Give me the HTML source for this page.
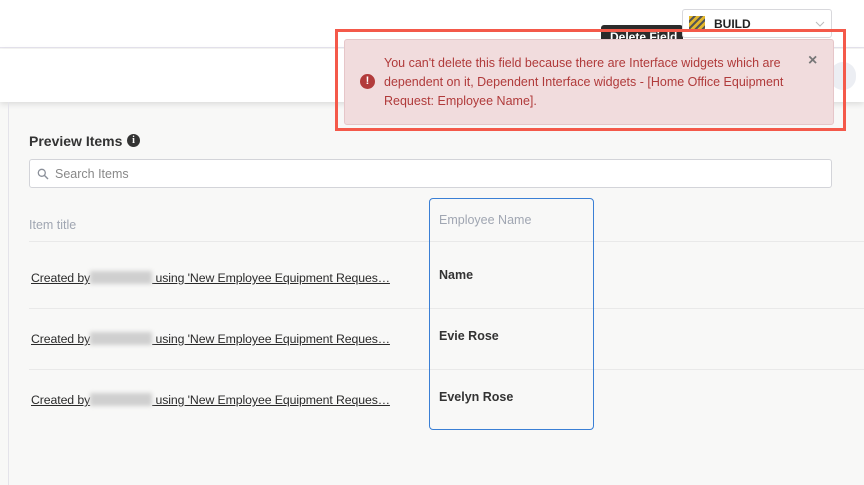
<!DOCTYPE html>
<html><head><style>
*{box-sizing:border-box;margin:0;padding:0}
body{width:864px;height:485px;overflow:hidden;background:#f8f8f7;font-family:"Liberation Sans",Arial,sans-serif;position:relative}
.abs{position:absolute}
.hdr{left:0;top:0;width:864px;height:48px;background:#fff;border-bottom:1px solid #e6e4ee}
.bar{left:0;top:49px;width:864px;height:53px;background:#fff;box-shadow:0 2px 6px rgba(0,0,0,.12)}
.lside{left:8px;top:102px;width:1px;height:383px;background:#e4e3ea}
.line{height:1px;background:#e9e9e9;left:29px;width:835px}
.link{left:31px;font-size:12.3px;letter-spacing:-0.1px;color:#2a2a2a;text-decoration:underline;white-space:nowrap}
.blur{display:inline-block;width:62px;height:13px;background:#cfcfcf;filter:blur(2px);vertical-align:-2px}
.name{left:439px;font-size:12.5px;font-weight:bold;color:#333}
</style></head><body>
<div class="abs hdr"></div>
<div class="abs" style="left:601px;top:25px;width:82px;height:20px;background:#2b2b2b;border-radius:3px;color:#fff;font-size:12px;font-weight:bold;padding:5px 0 0 9px">Delete Field</div>
<div class="abs" style="left:682px;top:9px;width:150px;height:29px;background:#fff;border:1px solid #d8d8dc;border-radius:3px">
  <div class="abs" style="left:6px;top:6px;width:16px;height:16px;background:repeating-linear-gradient(135deg,#e3b72c 0 3px,#555 3px 5px)"></div>
  <div class="abs" style="left:31px;top:7px;font-size:12px;font-weight:bold;color:#222">BUILD</div>
  <svg class="abs" style="left:132px;top:11px" width="10" height="6" viewBox="0 0 10 6"><path d="M1 1l4 4 4-4" fill="none" stroke="#bbb" stroke-width="1"/></svg>
</div>
<div class="abs bar"></div>
<div class="abs" style="left:830px;top:62px;width:26px;height:28px;background:#eceef3;border-radius:14px"></div>
<div class="abs lside"></div>

<div class="abs" style="left:335px;top:29px;width:511px;height:102px;border:3px solid #f4594a"></div>
<div class="abs" style="left:344px;top:39px;width:490px;height:86px;background:#f1dcdd;border:1px solid #e6c6c9;border-radius:3px">
  <div class="abs" style="left:15px;top:34px;width:15px;height:15px;border-radius:50%;background:#b23b3b;color:#fff;font-size:11px;font-weight:bold;text-align:center;line-height:15px">!</div>
  <div class="abs" style="left:39px;top:14px;width:410px;font-size:12.5px;line-height:19px;color:#b03a3a">You can't delete this field because there are Interface widgets which are dependent on it, Dependent Interface widgets - [Home Office Equipment Request: Employee Name].</div>
  <div class="abs" style="left:463px;top:12px;font-size:16px;font-weight:bold;color:#777">&times;</div>
</div>

<div class="abs" style="left:29px;top:133px;font-size:14px;font-weight:bold;color:#333">Preview Items</div>
<div class="abs" style="left:127px;top:134px;width:13px;height:13px;border-radius:50%;background:#333;color:#fff;font-size:10px;font-weight:bold;text-align:center;line-height:13px;font-family:'Liberation Serif',serif">i</div>
<div class="abs" style="left:29px;top:159px;width:803px;height:29px;background:#fff;border:1px solid #d3d4d9;border-radius:3px">
  <svg class="abs" style="left:7px;top:8px" width="12" height="12" viewBox="0 0 12 12"><circle cx="4.8" cy="4.8" r="3.5" fill="none" stroke="#8a8f99" stroke-width="1.3"/><line x1="7.4" y1="7.4" x2="11" y2="11" stroke="#8a8f99" stroke-width="1.4"/></svg>
  <div class="abs" style="left:25px;top:7px;font-size:12.5px;color:#888">Search Items</div>
</div>
<div class="abs" style="left:29px;top:218px;font-size:12.5px;color:#a0a6b2">Item title</div>
<div class="abs line" style="top:241px"></div>
<div class="abs line" style="top:308px"></div>
<div class="abs line" style="top:369px"></div>
<div class="abs link" style="top:271px">Created by<span class="blur"></span> using 'New Employee Equipment Reques…</div>
<div class="abs link" style="top:332px">Created by<span class="blur"></span> using 'New Employee Equipment Reques…</div>
<div class="abs link" style="top:393px">Created by<span class="blur"></span> using 'New Employee Equipment Reques…</div>

<div class="abs" style="left:429px;top:198px;width:165px;height:232px;border:1px solid #3a7fd5;border-radius:4px"></div>
<div class="abs" style="left:439px;top:213px;font-size:12.5px;color:#a0a6b2">Employee Name</div>
<div class="abs name" style="top:268px">Name</div>
<div class="abs name" style="top:329px">Evie Rose</div>
<div class="abs name" style="top:390px">Evelyn Rose</div>
</body></html>
